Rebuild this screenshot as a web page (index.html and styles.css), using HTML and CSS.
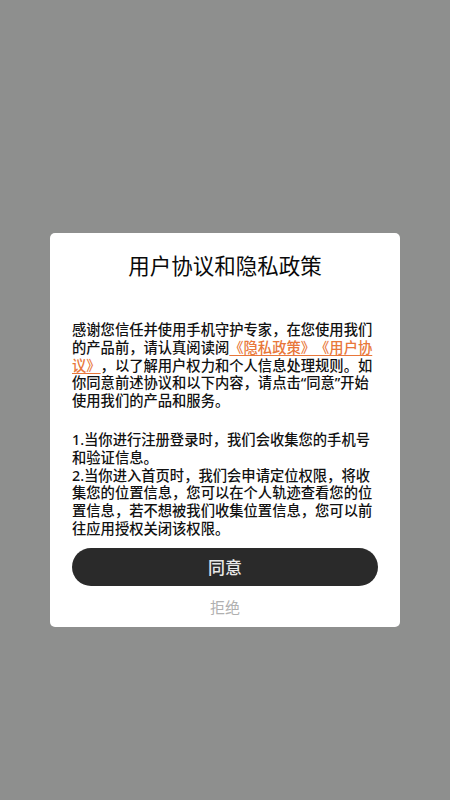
FILE: index.html
```html
<!DOCTYPE html>
<html lang="zh-CN">
<head>
<meta charset="utf-8">
<title>用户协议和隐私政策</title>
<link rel="stylesheet" href="styles.css">
</head>
<body>
<div class="overlay">
  <div class="dialog">
    <h1 class="title">用户协议和隐私政策</h1>
    <div class="content">
      <p class="para">感谢您信任并使用手机守护专家，在您使用我们的产品前，请认真阅读阅<a class="link" href="#">《隐私政策》《用户协议》</a>，以了解用户权力和个人信息处理规则。如你同意前述协议和以下内容，请点击“同意”开始使用我们的产品和服务。</p>
      <p class="para second">1.当你进行注册登录时，我们会收集您的手机号和验证信息。<br>2.当你进入首页时，我们会申请定位权限，将收集您的位置信息，您可以在个人轨迹查看您的位置信息，若不想被我们收集位置信息，您可以前往应用授权关闭该权限。</p>
    </div>
    <button class="agree" type="button">同意</button>
    <button class="reject" type="button">拒绝</button>
  </div>
</div>
</body>
</html>
```
FILE: styles.css
```css
html, body {
  margin: 0;
  padding: 0;
}
body {
  width: 450px;
  height: 800px;
  background: #8e8f8e;
  font-family: "Noto Sans", "Noto Sans CJK SC", sans-serif;
  text-spacing-trim: space-all;
}
.overlay {
  display: flex;
  flex-direction: column;
  align-items: center;
  padding-top: 233px;
}
.dialog {
  width: 350px;
  box-sizing: border-box;
  background: #ffffff;
  border-radius: 5px;
  display: flex;
  flex-direction: column;
  padding: 18px 0 10px;
}
.title {
  margin: 0;
  font-size: 21.5px;
  line-height: 30px;
  font-weight: 400;
  color: #0a0a0a;
  text-align: center;
}
.content {
  padding: 40px 22px 0;
}
.para {
  margin: 0;
  font-size: 14.3px;
  line-height: 17.8px;
  font-weight: 500;
  color: #111111;
  text-spacing-trim: space-all;
}
.para.second {
  margin-top: 21px;
}
.link {
  color: #e8773a;
  text-decoration: underline;
  text-decoration-thickness: 1px;
  text-underline-offset: 2px;
}
.agree {
  margin: 10px 22px 0;
  height: 38px;
  border: none;
  border-radius: 19px;
  background: #2a2a2a;
  color: #e8e8e8;
  font-family: inherit;
  font-size: 17px;
  font-weight: 500;
  padding: 0;
}
.reject {
  margin: 11px auto 0;
  height: 20px;
  line-height: 20px;
  border: none;
  background: transparent;
  color: #b0b0b0;
  font-family: inherit;
  font-size: 15px;
  padding: 0;
}
```
